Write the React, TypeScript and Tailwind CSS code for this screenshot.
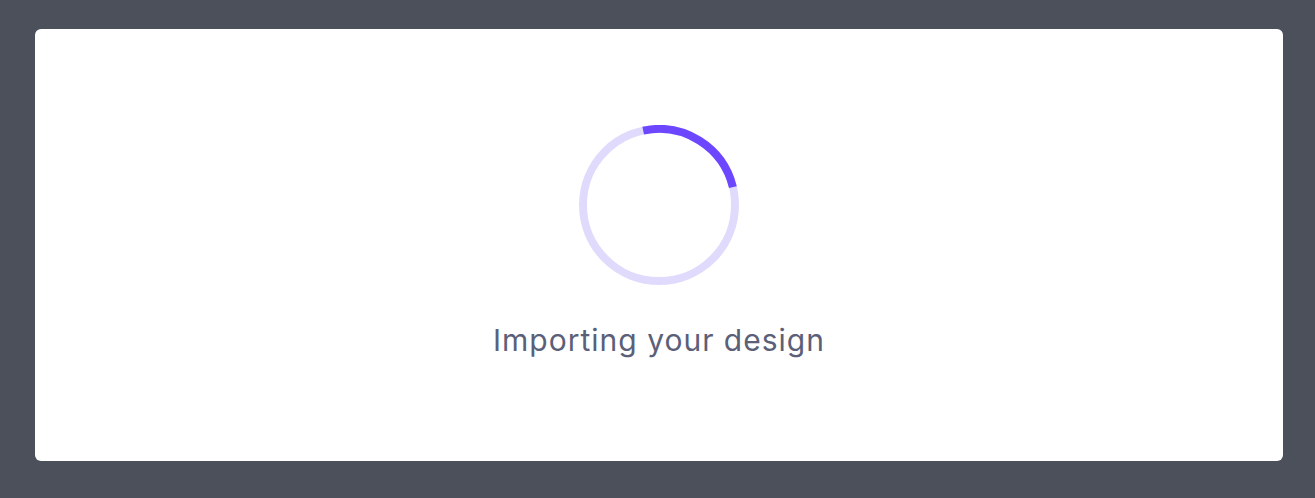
export default function App() {
  return (
    <div className="h-[498px] w-[1315px] bg-[#4b505b] pl-[35px] pt-[29px]">
      <div className="flex h-[432px] w-[1248px] flex-col items-center rounded-md bg-white pt-[96px]">
        <Spinner />
        <p className="mt-[37px] font-['Inter',sans-serif] text-[30px] leading-[36px] tracking-[1px] text-[#5b6078]">
          Importing your design
        </p>
      </div>
    </div>
  );
}

function Spinner() {
  const r = 76;
  const c = 2 * Math.PI * r;
  return (
    <svg width="160" height="160" viewBox="0 0 160 160">
      <circle cx="80" cy="80" r={r} fill="none" stroke="#e0dbfd" strokeWidth="8" />
      <circle
        cx="80"
        cy="80"
        r={r}
        fill="none"
        stroke="#6c47ff"
        strokeWidth="8"
        strokeDasharray={`${c * 0.245} ${c}`}
        transform="rotate(-102 80 80)"
      />
    </svg>
  );
}
